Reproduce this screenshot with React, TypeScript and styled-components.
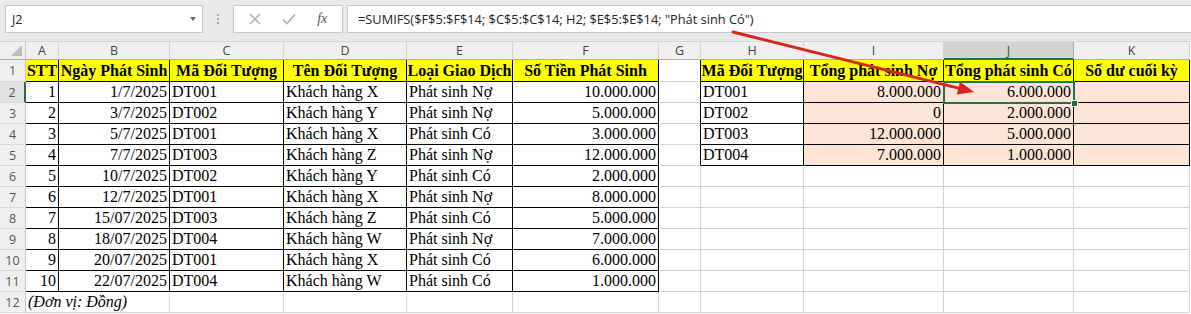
import React from 'react';
import styled, { createGlobalStyle } from 'styled-components';

const GlobalStyle = createGlobalStyle`
  html, body {
    margin: 0;
    padding: 0;
    background: #fff;
  }
  body {
    font-family: "Liberation Serif", "Times New Roman", serif;
  }
`;

const GRID_LINE = '#d4d4d4';
const BLACK = '#000';
const YELLOW = '#ffff00';
const PINK = '#fce4d6';
const GREEN = '#217346';

const COLS = ['A', 'B', 'C', 'D', 'E', 'F', 'G', 'H', 'I', 'J', 'K'];
const WIDTHS = [33, 111, 114, 123, 106, 146, 42, 103, 140, 130, 116];

const mainHead = ['STT', 'Ngày Phát Sinh', 'Mã Đối Tượng', 'Tên Đối Tượng', 'Loại Giao Dịch', 'Số Tiền Phát Sinh'];
const sideHead = ['Mã Đối Tượng', 'Tổng phát sinh Nợ', 'Tổng phát sinh Có', 'Số dư cuối kỳ'];

const transactions = [
  ['1', '1/7/2025', 'DT001', 'Khách hàng X', 'Phát sinh Nợ', '10.000.000'],
  ['2', '3/7/2025', 'DT002', 'Khách hàng Y', 'Phát sinh Nợ', '5.000.000'],
  ['3', '5/7/2025', 'DT001', 'Khách hàng X', 'Phát sinh Có', '3.000.000'],
  ['4', '7/7/2025', 'DT003', 'Khách hàng Z', 'Phát sinh Nợ', '12.000.000'],
  ['5', '10/7/2025', 'DT002', 'Khách hàng Y', 'Phát sinh Có', '2.000.000'],
  ['6', '12/7/2025', 'DT001', 'Khách hàng X', 'Phát sinh Nợ', '8.000.000'],
  ['7', '15/07/2025', 'DT003', 'Khách hàng Z', 'Phát sinh Có', '5.000.000'],
  ['8', '18/07/2025', 'DT004', 'Khách hàng W', 'Phát sinh Nợ', '7.000.000'],
  ['9', '20/07/2025', 'DT001', 'Khách hàng X', 'Phát sinh Có', '6.000.000'],
  ['10', '22/07/2025', 'DT004', 'Khách hàng W', 'Phát sinh Có', '1.000.000'],
];

const summary = [
  ['DT001', '8.000.000', '6.000.000', ''],
  ['DT002', '0', '2.000.000', ''],
  ['DT003', '12.000.000', '5.000.000', ''],
  ['DT004', '7.000.000', '1.000.000', ''],
];

// which columns hold numbers (right aligned)
const numericCols = [0, 1, 5, 8, 9, 10];

const inMain = (r: number, c: number) => r >= 1 && r <= 11 && c >= 0 && c <= 5;
const inSide = (r: number, c: number) => r >= 1 && r <= 5 && c >= 7 && c <= 10;
const inTable = (r: number, c: number) => inMain(r, c) || inSide(r, c);

const Window = styled.div`
  position: relative;
  width: 1191px;
  height: 314px;
  overflow: hidden;
  background: #fff;
`;

const FormulaBar = styled.div`
  box-sizing: border-box;
  height: 42px;
  background: #e9e9e9;
  border-bottom: 1px solid #d6d6d6;
  display: flex;
  align-items: flex-start;
  padding: 5px 0 0 5px;
  font-family: "Open Sans", "Noto Sans", sans-serif;
`;

const NameBox = styled.div`
  box-sizing: border-box;
  width: 198px;
  height: 28px;
  background: #fff;
  border: 1px solid #c6c6c6;
  display: flex;
  align-items: center;
  justify-content: space-between;
  padding: 0 6px 0 6px;
  font-size: 12.5px;
  color: #222;
`;

const DropArrow = styled.span`
  width: 0;
  height: 0;
  border-left: 3.5px solid transparent;
  border-right: 3.5px solid transparent;
  border-top: 4px solid #6a6a6a;
`;

const Grip = styled.div`
  width: 30px;
  height: 28px;
  display: flex;
  flex-direction: column;
  align-items: center;
  justify-content: center;
  gap: 2px;

  span {
    width: 2px;
    height: 2px;
    background: #a9a9a9;
  }
`;

const FxBox = styled.div`
  box-sizing: border-box;
  width: 110px;
  height: 28px;
  background: #fff;
  border: 1px solid #c6c6c6;
  display: flex;
  align-items: center;
  justify-content: space-around;
  padding: 0 4px;
`;

const FxLabel = styled.span`
  font-family: "Liberation Serif", serif;
  font-style: italic;
  font-size: 14px;
  color: #555;
`;

const FormulaInput = styled.div`
  box-sizing: border-box;
  flex: 1;
  height: 28px;
  margin-left: 4px;
  background: #fff;
  border: 1px solid #c6c6c6;
  border-right: none;
  display: flex;
  align-items: center;
  padding-left: 10px;
  font-size: 12.8px;
  color: #222;
  white-space: nowrap;
`;

const Sheet = styled.div`
  display: grid;
  grid-template-columns: 26px ${WIDTHS.map(w => `${w}px`).join(' ')};
  grid-template-rows: 18px 22px repeat(11, 21px);
`;

const Corner = styled.div`
  box-sizing: border-box;
  background: #efefef;
  border-right: 1px solid #c6c6c6;
  border-bottom: 1px solid #ababab;
  position: relative;

  &::after {
    content: '';
    position: absolute;
    right: 3px;
    bottom: 3px;
    border-left: 11px solid transparent;
    border-bottom: 11px solid #bcbcbc;
  }
`;

const ColHead = styled.div<{ $active?: boolean }>`
  box-sizing: border-box;
  background: ${p => (p.$active ? '#d3d3d3' : '#efefef')};
  border-right: 1px solid ${p => (p.$active ? '#a9a9a9' : '#d5d5d5')};
  border-bottom: ${p => (p.$active ? `2px solid ${GREEN}` : '1px solid #ababab')};
  display: flex;
  align-items: center;
  justify-content: center;
  font-family: "Open Sans", "Noto Sans", sans-serif;
  font-size: 12.5px;
  color: ${p => (p.$active ? '#1f5c3a' : '#444')};
`;

const RowHead = styled.div<{ $active?: boolean }>`
  box-sizing: border-box;
  background: ${p => (p.$active ? '#e1e1e1' : '#efefef')};
  border-right: ${p => (p.$active ? `2px solid ${GREEN}` : '1px solid #c6c6c6')};
  border-bottom: 1px solid #d9d9d9;
  display: flex;
  align-items: center;
  justify-content: center;
  font-family: "Open Sans", "Noto Sans", sans-serif;
  font-size: 12.5px;
  color: #555;
`;

const Cell = styled.div<{
  $right: string;
  $bottom: string;
  $fill: string;
  $align: 'left' | 'right' | 'center';
  $bold?: boolean;
  $italic?: boolean;
  $span?: number;
  $selected?: boolean;
}>`
  box-sizing: border-box;
  grid-column: span ${p => p.$span || 1};
  border-right: 1px solid ${p => p.$right};
  border-bottom: 1px solid ${p => p.$bottom};
  background: ${p => p.$fill};
  display: flex;
  align-items: flex-end;
  justify-content: ${p => (p.$align === 'right' ? 'flex-end' : p.$align === 'center' ? 'center' : 'flex-start')};
  padding: 0 2px 1px 2px;
  font-size: 16px;
  line-height: 18px;
  font-weight: ${p => (p.$bold ? 700 : 400)};
  font-style: ${p => (p.$italic ? 'italic' : 'normal')};
  color: #000;
  white-space: nowrap;
  overflow: ${p => (p.$selected ? 'visible' : 'hidden')};
  position: ${p => (p.$selected ? 'relative' : 'static')};
`;

const Selection = styled.div`
  position: absolute;
  left: -1px;
  top: -1px;
  right: -2px;
  bottom: -2px;
  border: 2px solid ${GREEN};
  z-index: 2;
  pointer-events: none;

  &::after {
    content: '';
    position: absolute;
    right: -5px;
    bottom: -5px;
    width: 5px;
    height: 5px;
    background: ${GREEN};
    border: 1px solid #fff;
  }
`;

const ArrowLayer = styled.svg`
  position: absolute;
  left: 0;
  top: 0;
  z-index: 5;
  pointer-events: none;
`;

function cellValue(r: number, c: number): string {
  if (r === 1) {
    if (c <= 5) return mainHead[c];
    if (c >= 7) return sideHead[c - 7];
    return '';
  }
  if (r >= 2 && r <= 11 && c <= 5) return transactions[r - 2][c];
  if (r >= 2 && r <= 5 && c >= 7) return summary[r - 2][c - 7];
  return '';
}

function Arrow() {
  // red arrow from the formula text down to J2
  const x1 = 733;
  const y1 = 32;
  const tx = 974;
  const ty = 92;
  const dx = tx - x1;
  const dy = ty - y1;
  const len = Math.hypot(dx, dy);
  const ux = dx / len;
  const uy = dy / len;
  const headLen = 16;
  const half = 6.5;
  const bx = tx - ux * headLen;
  const by = ty - uy * headLen;
  const p1 = `${bx - uy * half},${by + ux * half}`;
  const p2 = `${bx + uy * half},${by - ux * half}`;
  return (
    <ArrowLayer width={1191} height={314} viewBox="0 0 1191 314">
      <line x1={x1} y1={y1} x2={bx + ux * 2} y2={by + uy * 2} stroke="#d8261c" strokeWidth={3} strokeLinecap="round" />
      <polygon points={`${tx},${ty} ${p1} ${p2}`} fill="#d8261c" />
    </ArrowLayer>
  );
}

export default function App() {
  const rows = Array.from({ length: 12 }, (_, i) => i + 1);

  return (
    <Window>
      <GlobalStyle />
      <FormulaBar>
        <NameBox>
          <span>J2</span>
          <DropArrow />
        </NameBox>
        <Grip>
          <span />
          <span />
          <span />
        </Grip>
        <FxBox>
          <svg width="12" height="12" viewBox="0 0 12 12">
            <path d="M1 1 L11 11 M11 1 L1 11" stroke="#acacac" strokeWidth="1.4" fill="none" />
          </svg>
          <svg width="14" height="12" viewBox="0 0 14 12">
            <path d="M1 6.5 L5 10.5 L13 1.5" stroke="#acacac" strokeWidth="1.6" fill="none" />
          </svg>
          <FxLabel>fx</FxLabel>
        </FxBox>
        <FormulaInput>=SUMIFS($F$5:$F$14; $C$5:$C$14; H2; $E$5:$E$14; "Phát sinh Có")</FormulaInput>
      </FormulaBar>

      <Sheet>
        <Corner />
        {COLS.map(col => (
          <ColHead key={col} $active={col === 'J'}>
            {col}
          </ColHead>
        ))}

        {rows.map(r => (
          <React.Fragment key={r}>
            <RowHead $active={r === 2}>{r}</RowHead>
            {r === 12 ? (
              <>
                <Cell $span={2} $right={GRID_LINE} $bottom={GRID_LINE} $fill="#fff" $align="left" $italic>
                  (Đơn vị: Đồng)
                </Cell>
                {COLS.slice(2).map((_, i) => (
                  <Cell key={i} $right={GRID_LINE} $bottom={GRID_LINE} $fill="#fff" $align="left" />
                ))}
              </>
            ) : (
              COLS.map((_, c) => {
                const table = inTable(r, c);
                const right = table || inTable(r, c + 1) ? BLACK : GRID_LINE;
                const bottom = table || inTable(r + 1, c) ? BLACK : GRID_LINE;
                let fill = '#fff';
                if (r === 1 && table) fill = YELLOW;
                else if (inSide(r, c) && c >= 8) fill = PINK;
                const align = r === 1 ? 'center' : numericCols.includes(c) ? 'right' : 'left';
                const selected = r === 2 && c === 9;
                return (
                  <Cell
                    key={c}
                    $right={right}
                    $bottom={bottom}
                    $fill={fill}
                    $align={align}
                    $bold={r === 1}
                    $selected={selected}
                  >
                    {cellValue(r, c)}
                    {selected && <Selection />}
                  </Cell>
                );
              })
            )}
          </React.Fragment>
        ))}
      </Sheet>

      <Arrow />
    </Window>
  );
}
